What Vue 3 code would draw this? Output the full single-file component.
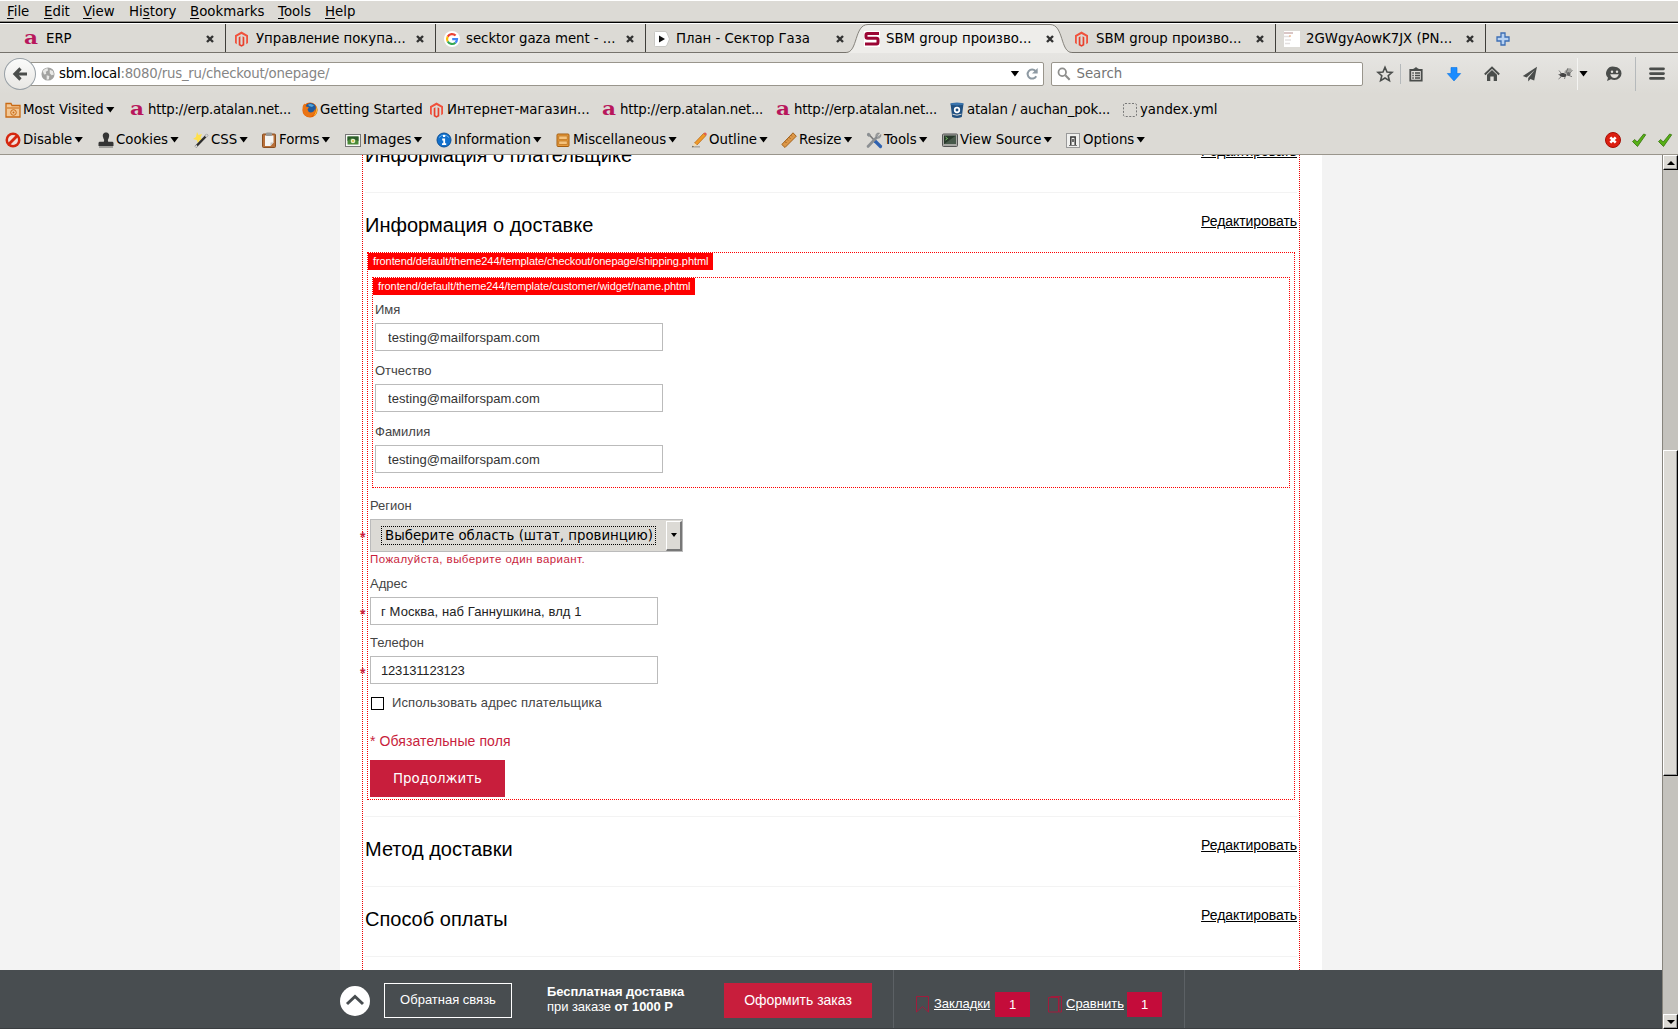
<script setup>
import { ref } from 'vue'

// SVG bodies, all on a 16x16 grid
const icons = {
  atalan: '<text x="0" y="13" font-family="DejaVu Serif, serif" font-weight="bold" font-size="18" textLength="14" lengthAdjust="spacingAndGlyphs" fill="#b8165c">a</text>',
  magento: '<path d="M7.500 0.500 14 4.300V12l-1.800 1.200V5.500L7.500 2.900 2.800 5.500v7.700L1 12V4.300z" fill="#f0513c"/><path d="M4.700 6.200 6.400 5.300v8l1.100.7 1.100-.7v-8l1.700.9v8.000L7.500 15.800l-2.800-1.600z" fill="#e8402c"/>',
  google: '<circle cx="8" cy="8" r="8" fill="#fff"/><g fill="none" stroke-width="2.2"><path d="M11.6 4.6A5 5 0 0 0 3.7 5.6" stroke="#ea4335"/><path d="M3.7 5.6a5 5 0 0 0 0 4.9" stroke="#fbbc05"/><path d="M3.7 10.5a5 5 0 0 0 7.7 1.2" stroke="#34a853"/><path d="M11.4 11.7A5 5 0 0 0 13 8.2H8.2" stroke="#4285f4"/></g>',
  play: '<path d="M1.500 0.500h9.500q1.500 0 2 1.500l2.500 6-2.500 6q-.5 1.500-2 1.500H1.500a1 1 0 0 1-1-1v-13a1 1 0 0 1 1-1z" fill="#fff" stroke="#c9c8c4"/><path d="M5 4.500 11 8l-6 3.500z" fill="#111"/>',
  sbm: '<rect width="16" height="16" fill="#fff"/><path d="M15 2.500H3.500Q2 2.500 2 4v1.500Q2 7.200 3.500 7.200h9Q14 7.200 14 9v2Q14 13 12.500 13H1" fill="none" stroke="#9b0634" stroke-width="3"/>',
  doc: '<rect width="16" height="16" fill="#fff"/><path d="M0 2h9M0 5.500h6M1 9h6M1 12.500h5" stroke="#e3dfdf" stroke-width="1.500"/><path d="M0 2h9" stroke="#c9a6a6"/><path d="M5 5h2" stroke="#e6a06c"/>',
  folder: '<path d="M1 3.500V1.500h5l1 2h8v11.500H1z" fill="#f3c896" stroke="#c96a14" stroke-width="1.300"/><path d="M2 6h12" stroke="#c96a14"/><circle cx="8.500" cy="10.500" r="2.800" fill="none" stroke="#c96a14"/><circle cx="8.500" cy="10.500" r="1" fill="#c96a14"/>',
  firefox: '<circle cx="8" cy="8" r="7.600" fill="#e66000"/><circle cx="8.600" cy="6.200" r="5.300" fill="#1f5a9e"/><path d="M6 2.500Q9 1 12 3.500L10 5 7 4z" fill="#4ea3dc"/><path d="M.6 5Q1 2.500 2.500 1.500L4 4.500l3 .8-1.500 2.200q.5 2.500 3 3 3.500 0 5-4.500.5 6-4.500 8.500Q4.500 16 1.500 12z" fill="#ea7415"/><path d="M14.500 4q1.300 3.500 0 6.500-1 2.500-3 3.700 3-4 3-10.200z" fill="#ffcf3a"/>',
  bucket: '<path d="M1.500 1.500h13L12.800 15q-4.800 1.800-9.600 0z" fill="#205081"/><ellipse cx="8" cy="2" rx="6.700" ry="1.500" fill="#3a74ad"/><circle cx="8" cy="8" r="2.300" fill="#205081" stroke="#fff" stroke-width="1.700"/><path d="M3.500 12.200q4.500 2 9 0" stroke="#dcdad5" fill="none"/>',
  dashed: '<rect x="1.500" y="1.500" width="13" height="13" rx="1.500" fill="none" stroke="#777" stroke-dasharray="2 1.500"/>',
  disable: '<circle cx="8" cy="8" r="7.500" fill="#d5270f"/><circle cx="8" cy="8" r="5" fill="#f2dfda"/><path d="M4 12l8-8" stroke="#d5270f" stroke-width="2.800"/>',
  cookies: '<path d="M8 0.500c3 0 3.600 2.500 3 4.500Q10.500 7 9.800 8l.4 1.700h4.300q1 0 1 1.500V14H.5v-2.800q0-1.500 1-1.500h4.300L6.200 8Q5.500 7 5 5c-.6-2 0-4.500 3-4.500z" fill="#353535"/><path d="M1 15h14" stroke="#6a6a68"/>',
  css: '<path d="M4 0l1.500 3L9 2 7.500 5.500 10 8 6.500 8 5 11.500 3.800 8 0 7l3-2z" fill="#ffe04a"/><path d="M14.500 2.500 2.500 15" stroke="#2e2e2e" stroke-width="2.500"/><path d="M14.500 2.500 12.500 4.600M4 13.500 2.500 15" stroke="#d8d8d8" stroke-width="2"/>',
  forms: '<rect x="1.500" y="2" width="13" height="13.500" rx="1" fill="#b8703a" stroke="#8a4f20"/><path d="M4 3.500h8.500v7L9.500 14H4z" fill="#f5f5f3"/><path d="M9.500 14v-3.500h3z" fill="#c6c6c4"/><rect x="5" y=".5" width="6" height="3.500" rx="1" fill="#9a9a98"/>',
  images: '<rect x=".5" y="2.500" width="15" height="12" fill="#f7f7f5" stroke="#777"/><rect x="2.500" y="4.500" width="11" height="8" fill="#4a8a38"/><path d="M2.500 9l4-3 7 3V4.500h-11z" fill="#2c5c2c"/><circle cx="8" cy="9" r="2.300" fill="#e9efca"/><circle cx="8" cy="9" r=".9" fill="#d7b72e"/>',
  info: '<circle cx="8" cy="8" r="7" fill="#1170cc" stroke="#0b4f95"/><path d="M3 5.500q5-5 10 0" stroke="#6fb4f0" fill="none"/><path d="M7 4h2.200M6.200 7.500h2v4.500M6 12.200h4.200" stroke="#fff" stroke-width="1.800" fill="none"/>',
  misc: '<rect x="2" y="2" width="12" height="12.500" rx="1" fill="#e79a3c" stroke="#a55e10"/><rect x="3.800" y="4" width="8.400" height="3.600" fill="#f5c27c" stroke="#b8701c" stroke-width=".7"/><rect x="3.800" y="9" width="8.400" height="3.600" fill="#f5c27c" stroke="#b8701c" stroke-width=".7"/>',
  outline: '<path d="M2 14.800h7" stroke="#aaa8a2" stroke-width="1.500"/><path d="M3.500 11 12.500 1.500l2.500 2L6 13z" fill="#f09a28" stroke="#b3620e" stroke-width=".7"/><path d="M12.500 1.500l2.500 2 1-1.500-2-1.700z" fill="#e35a50"/><path d="M3.500 11 .8 15.500 6 13z" fill="#f3dcb0"/><path d="M.8 15.500l1-1.700 1 1z" fill="#333"/>',
  resize: '<path d="M.8 12.500 12 .8l3.300 3.400L4 15.500z" fill="#dc9748" stroke="#a5631c"/><path d="M4 9.500l1.500 1.500M6 7.400l1 1M8 5.300l1.500 1.500M10 3.300l1 1" stroke="#8a4f12" stroke-width=".8"/>',
  tools: '<path d="M2 1.500 9 9" stroke="#777" stroke-width="1.600"/><path d="M9 9l5.500 5.500" stroke="#2f62b0" stroke-width="3.200" stroke-linecap="round"/><path d="M2 14.500 11 5" stroke="#8b8f92" stroke-width="2.600" stroke-linecap="round"/><path d="M15 2.500 12.800 4.500 11.500 3.200 13.500 1Q10.500.5 9.800 3q-.2 2.500 2 3.200 3 .3 3.200-3.700z" fill="#a6aaad" stroke="#666" stroke-width=".5"/><path d="M1 3.500Q.5 1 3 .8L5 3 3 5z" fill="#8b8f92"/>',
  terminal: '<rect x=".5" y="2" width="15" height="12.500" rx="1" fill="#a7a7a3" stroke="#555"/><rect x="2" y="3.500" width="12" height="8.500" fill="#27382a"/><path d="M3.500 5l2 1.500-2 1.500" stroke="#7fd36c" fill="none" stroke-width=".9"/><path d="M2 12 14 3.500V12z" fill="#47594a"/>',
  options: '<rect x="1.500" y="1.500" width="13" height="14" fill="#f0f0ee" stroke="#999"/><path d="M5.800 13V5h4.400V13M8 7v3" stroke="#333" stroke-width="1.400" fill="none"/><path d="M4 13.500h8" stroke="#777"/>',
  globe: '<circle cx="8" cy="8" r="7.500" fill="#a3a3a1"/><path d="M2 4.500Q5 1 7.500 1.500L8 4 5.500 5.500 6 8 3.500 8.500zM10 3l3.500 1.500 1.300 4-2.800 1L10 7zM6.500 9.500l3 .8L9 14l-2.500.5z" fill="#e9e9e7"/>',
  star: '<path d="M8 1.300 10 6l5 .4-3.800 3.300 1.200 4.900L8 12l-4.400 2.600 1.200-4.900L1 6.400 6 6z" fill="none" stroke="#4a4d4b" stroke-width="1.600"/>',
  clipboard: '<path d="M2.300 4h11.400v10.700H2.300z" fill="none" stroke="#4a4d4b" stroke-width="1.800"/><path d="M5 4q0-1.500 1.500-1.700Q8 0 9.500 2.300 11 2.500 11 4z" fill="#4a4d4b"/><path d="M4.300 7h1.500M7 7h5M4.300 9.500h1.500M7 9.500h5M4.300 12h1.500M7 12h5" stroke="#4a4d4b" stroke-width="1.400"/>',
  download: '<path d="M5 1.500h6v6h3.700L8 15 1.300 7.500H5z" fill="#1a8cff" stroke="#0c74e0" stroke-width=".6"/>',
  home: '<path d="M.8 8.500 8 1.500l7.200 7" fill="none" stroke="#4a4d4b" stroke-width="1.900"/><path d="M3 8.800 8 4l5 4.800V15H9.700v-4.500H6.300V15H3z" fill="#4a4d4b"/>',
  plane: '<path d="M15 .8.8 10l3.800 1.400L12.800 4 6.200 12v3.500l2.200-2.600 3.800 1.500z" fill="#4a4d4b"/>',
  fly: '<ellipse cx="6" cy="9" rx="3.500" ry="2" fill="#444" transform="rotate(10 6 9)"/><ellipse cx="11" cy="5" rx="4" ry="2" fill="#a5a5a1" transform="rotate(-30 11 5)"/><circle cx="11.500" cy="8" r="2" fill="#666"/><path d="M4 11l-2.500 2M8 11l-.5 2M12 9.500l3 1.200M13 7l2.500-3M4 7L2 4.500M1.500 8.500h3M9 7l2-5" stroke="#555" stroke-width=".7"/>',
  smiley: '<path d="M8.500.8a7 6.600 0 0 1 0 13.200q-2 0-3.500-.7L1 15l1-3.200A6.800 6.600 0 0 1 8.500.8z" fill="#4a4d4b"/><circle cx="6" cy="5.800" r="1.200" fill="#e2e1dd"/><circle cx="11" cy="5.800" r="1.200" fill="#e2e1dd"/><path d="M4.200 8.300h8.600q-1 3.700-4.300 3.700T4.200 8.300z" fill="#e2e1dd"/>',
  menu: '<path d="M1.500 2.800h13M1.500 7.600h13M1.500 12.400h13" stroke="#4a4d4b" stroke-width="2.800" stroke-linecap="round"/>',
  error: '<circle cx="8" cy="8" r="7.500" fill="#dc1e10" stroke="#a50d04"/><path d="M5.300 5.300l5.400 5.400M10.700 5.300l-5.400 5.400" stroke="#fff" stroke-width="2.600"/>',
  check: '<path d="M1.500 9.500l2.300-2 2.400 2.500 6.500-8 2 .8L6.500 14.500z" fill="#57b016" stroke="#33720a" stroke-width=".8"/>',
  reload: '<path d="M12 4.500A5.200 5.200 0 1 0 12.800 10.500" fill="none" stroke="#8e9aa3" stroke-width="2.300"/><path d="M14.500 1v6.500H8z" fill="#8e9aa3"/>',
  search: '<circle cx="6" cy="6" r="4.300" fill="none" stroke="#8f8f8d" stroke-width="2"/><path d="M9.500 9.500l5 5" stroke="#8f8f8d" stroke-width="2.400"/>',
  plus: '<path d="M6 2h4v4h4v4h-4v4H6v-4H2V6h4z" fill="#b8d2f2" stroke="#3c6eb4" stroke-width="1.300"/>'
}

const menu = [
  { key: 'F', rest: 'ile', w: 37 },
  { key: 'E', rest: 'dit', w: 39 },
  { key: 'V', rest: 'iew', w: 46 },
  { pre: 'Hi', key: 's', rest: 'tory', w: 61 },
  { key: 'B', rest: 'ookmarks', w: 88 },
  { key: 'T', rest: 'ools', w: 47 },
  { key: 'H', rest: 'elp', w: 40 }
]

const tabs = [
  { icon: 'atalan', title: 'ERP' },
  { icon: 'magento', title: 'Управление покупа...' },
  { icon: 'google', title: 'secktor gaza ment - ...' },
  { icon: 'play', title: 'План - Сектор Газа' },
  { icon: 'sbm', title: 'SBM group произво...', active: true },
  { icon: 'magento', title: 'SBM group произво...' },
  { icon: 'doc', title: '2GWgyAowK7JX (PN...' }
]

const bookmarks = [
  { icon: 'folder', title: 'Most Visited', drop: true, w: 125 },
  { icon: 'atalan', title: 'http://erp.atalan.net...', tight: true, w: 172 },
  { icon: 'firefox', title: 'Getting Started', w: 127 },
  { icon: 'magento', title: 'Интернет-магазин...', w: 173 },
  { icon: 'atalan', title: 'http://erp.atalan.net...', tight: true, w: 174 },
  { icon: 'atalan', title: 'http://erp.atalan.net...', tight: true, w: 173 },
  { icon: 'bucket', title: 'atalan / auchan_pok...', tight: true, w: 173 },
  { icon: 'dashed', title: 'yandex.yml', w: 110 }
]

const devtools = [
  { icon: 'disable', title: 'Disable', w: 93 },
  { icon: 'cookies', title: 'Cookies', w: 95 },
  { icon: 'css', title: 'CSS', w: 68 },
  { icon: 'forms', title: 'Forms', w: 84 },
  { icon: 'images', title: 'Images', w: 91 },
  { icon: 'info', title: 'Information', w: 119 },
  { icon: 'misc', title: 'Miscellaneous', w: 136 },
  { icon: 'outline', title: 'Outline', w: 90 },
  { icon: 'resize', title: 'Resize', w: 85 },
  { icon: 'tools', title: 'Tools', w: 76 },
  { icon: 'terminal', title: 'View Source', w: 123 },
  { icon: 'options', title: 'Options', w: 90 }
]

const names = ref([
  { label: 'Имя', value: 'testing@mailforspam.com' },
  { label: 'Отчество', value: 'testing@mailforspam.com' },
  { label: 'Фамилия', value: 'testing@mailforspam.com' }
])

const address = ref('г Москва, наб Ганнушкина, влд 1')
const phone = ref('123131123123')
</script>

<template>
  <div class="window">
    <nav class="menubar">
      <span v-for="m in menu" :key="m.key + m.rest" :style="{ width: m.w + 'px' }">{{ m.pre }}<u>{{ m.key }}</u>{{ m.rest }}</span>
    </nav>

    <div class="tabs">
      <div v-for="(t, i) in tabs" :key="i" class="tab" :class="{ 'tab--active': t.active, 'tab--before': i === 3 }">
        <svg v-if="t.active" class="tab__shape" viewBox="0 0 226 29">
          <path d="M0 28.500C12 28.500 8 .5 22 .5H204C218 .5 214 28.500 226 28.500V29H0z" fill="#eeedea" />
          <path d="M0 28.500C12 28.500 8 .5 22 .5H204C218 .5 214 28.500 226 28.500" fill="none" stroke="#85827b" />
        </svg>
        <svg class="ico" viewBox="0 0 16 16" v-html="icons[t.icon]"></svg>
        <span class="tab__title">{{ t.title }}</span>
        <svg class="tab__close" viewBox="0 0 8 8"><path d="M1 1l6 6M7 1L1 7" stroke="#333" stroke-width="2.400" /></svg>
      </div>
      <svg class="ico tabs__new" viewBox="0 0 16 16" v-html="icons.plus"></svg>
    </div>

    <div class="navbar">
      <div class="back">
        <svg viewBox="0 0 16 16"><path d="M15 8H4M8.500 2.500 3 8l5.500 5.500" fill="none" stroke="#4a4d4b" stroke-width="3.200" /></svg>
      </div>
      <div class="url">
        <svg class="ico ico--s" viewBox="0 0 16 16" v-html="icons.globe"></svg>
        <span class="url__text"><b>sbm.local</b>:8080/rus_ru/checkout/onepage/</span>
        <i class="caret"></i>
        <svg class="ico ico--s" viewBox="0 0 16 16" v-html="icons.reload"></svg>
      </div>
      <div class="search">
        <svg class="ico ico--s" viewBox="0 0 16 16" v-html="icons.search"></svg>
        <span>Search</span>
      </div>
      <div class="actions">
        <svg class="ico" viewBox="0 0 16 16" v-html="icons.star"></svg>
        <i class="sep sep--a"></i>
        <svg class="ico" viewBox="0 0 16 16" v-html="icons.clipboard"></svg>
        <svg class="ico gap" viewBox="0 0 16 16" v-html="icons.download"></svg>
        <svg class="ico gap" viewBox="0 0 16 16" v-html="icons.home"></svg>
        <svg class="ico gap" viewBox="0 0 16 16" v-html="icons.plane"></svg>
        <svg class="ico gap--s" viewBox="0 0 16 16" v-html="icons.fly"></svg>
        <i class="sep sep--b"></i>
        <i class="caret"></i>
        <svg class="ico gap--m" viewBox="0 0 16 16" v-html="icons.smiley"></svg>
        <i class="sep sep--c"></i>
        <svg class="ico gap--e" viewBox="0 0 16 16" v-html="icons.menu"></svg>
      </div>
    </div>

    <div class="bookmarks">
      <div v-for="(b, i) in bookmarks" :key="i" class="tool" :class="{ 'tool--tight': b.tight }" :style="{ width: b.w + 'px' }">
        <svg class="ico" viewBox="0 0 16 16" v-html="icons[b.icon]"></svg>
        <span>{{ b.title }}</span>
        <i v-if="b.drop" class="caret"></i>
      </div>
    </div>

    <div class="devbar">
      <div v-for="d in devtools" :key="d.title" class="tool" :style="{ width: d.w + 'px' }">
        <svg class="ico" viewBox="0 0 16 16" v-html="icons[d.icon]"></svg>
        <span>{{ d.title }}</span>
        <i class="caret"></i>
      </div>
      <div class="devbar__status">
        <svg class="ico" viewBox="0 0 16 16" v-html="icons.error"></svg>
        <svg class="ico" viewBox="0 0 16 16" v-html="icons.check"></svg>
        <svg class="ico" viewBox="0 0 16 16" v-html="icons.check"></svg>
      </div>
    </div>

    <div class="body">
      <main class="page">
        <div class="viewport">
          <div class="sheet">
            <div class="checkout">
              <section class="step step--first">
                <div class="step__head"><h2>Информация о плательщике</h2><a>Редактировать</a></div>
              </section>

              <section class="step step--open">
                <div class="step__head"><h2>Информация о доставке</h2><a>Редактировать</a></div>
                <form class="hint-box" @submit.prevent>
                  <span class="hint">frontend/default/theme244/template/checkout/onepage/shipping.phtml</span>

                  <div class="hint-box hint-box--name">
                    <span class="hint">frontend/default/theme244/template/customer/widget/name.phtml</span>
                    <div v-for="n in names" :key="n.label" class="field">
                      <label>{{ n.label }}</label>
                      <input v-model="n.value" class="wide" type="text">
                    </div>
                  </div>

                  <div class="field field--region">
                    <label>Регион</label>
                    <div class="row">
                      <em>*</em>
                      <div class="select">
                        <span>Выберите область (штат, провинцию)</span>
                        <div class="select__btn"><i></i></div>
                      </div>
                    </div>
                    <p class="error">Пожалуйста, выберите один вариант.</p>
                  </div>

                  <div class="field">
                    <label>Адрес</label>
                    <div class="row"><em>*</em><input v-model="address" type="text"></div>
                  </div>
                  <div class="field">
                    <label>Телефон</label>
                    <div class="row"><em>*</em><input v-model="phone" class="digits" type="text"></div>
                  </div>

                  <div class="same"><i></i><span>Использовать адрес плательщика</span></div>
                  <p class="required">* Обязательные поля</p>
                  <button class="continue">Продолжить</button>
                </form>
              </section>

              <section class="step">
                <div class="step__head"><h2>Метод доставки</h2><a>Редактировать</a></div>
              </section>
              <section class="step">
                <div class="step__head"><h2>Способ оплаты</h2><a>Редактировать</a></div>
              </section>
            </div>
          </div>
        </div>

        <footer class="footer">
          <div class="up"><svg viewBox="0 0 30 30"><path d="M7 18 15 10.500 23 18" fill="none" stroke="#484d50" stroke-width="3" /></svg></div>
          <div class="feedback">Обратная связь</div>
          <div class="free"><b>Бесплатная доставка</b><br>при заказе <b>от 1000 Р</b></div>
          <div class="order">Оформить заказ</div>
          <div class="lists">
            <svg viewBox="0 0 14 17"><path d="M.5.500h12v15.500L6.500 10.500.5 16z" fill="none" stroke="#a01c3c" /></svg>
            <a>Закладки</a><span class="badge">1</span>
            <svg class="second" viewBox="0 0 14 17"><path d="M.5 1.500h10v14.500H.500zM2.500.500h11v15.500h-2.500V1.500" fill="none" stroke="#a01c3c" /></svg>
            <a>Сравнить</a><span class="badge">1</span>
          </div>
        </footer>
      </main>

      <div class="scrollbar">
        <div class="scrollbar__btn"><i class="up-arrow"></i></div>
        <div class="scrollbar__track"><div class="scrollbar__thumb"></div></div>
        <div class="scrollbar__btn"><i class="down-arrow"></i></div>
      </div>
    </div>
  </div>
</template>

<style>
body {
  margin: 0;
  overflow: hidden;
}
</style>

<style scoped>
* {
  box-sizing: border-box;
}

.window {
  width: 1678px;
  height: 1029px;
  display: flex;
  flex-direction: column;
  background: #dcdad5;
  color: #000;
  font: 13.33px/18px "DejaVu Sans", sans-serif;
  white-space: nowrap;
  overflow: hidden;
}

.ico {
  width: 16px;
  height: 16px;
  flex: none;
  overflow: visible;
}

.ico--s {
  width: 14px;
  height: 14px;
}

.caret {
  flex: none;
  width: 9px;
  height: 6px;
  background: #000;
  clip-path: polygon(0 0, 100% 0, 50% 100%);
}

.menubar {
  height: 24px;
  padding: 2px 0 0 7px;
  display: flex;
  line-height: 17px;
  border-top: 1px solid #fff;
  box-shadow: inset 0 -1px #fff, inset 0 -2px #000, inset 0 -3px #8d8b85;
}

.menubar u {
  text-underline-offset: 2px;
}

.tabs {
  height: 29px;
  padding-left: 16px;
  display: flex;
  align-items: center;
  border-bottom: 1px solid #76736d;
}

.tab {
  position: relative;
  width: 210px;
  height: 28px;
  padding: 2px 11px 0 8px;
  display: flex;
  align-items: center;
  border-right: 1px solid #3f3e3a;
}

.tab--active,
.tab--before {
  border-right-color: transparent;
}

.tab__shape {
  position: absolute;
  left: -10px;
  top: 0;
  width: 226px;
  height: 29px;
}

.tab .ico,
.tab__title,
.tab__close {
  position: relative;
}

.tab__title {
  flex: 1;
  padding-left: 6px;
  letter-spacing: -0.03px;
}

.tab__close {
  width: 8px;
  height: 8px;
}

.tabs__new {
  margin: 2px 0 0 9px;
}

.navbar {
  height: 41px;
  padding: 0 13px 0 4px;
  display: flex;
  align-items: center;
  background: linear-gradient(#e6e5e2, #dcdad5);
}

.back {
  z-index: 1;
  width: 32px;
  height: 32px;
  display: grid;
  place-items: center;
  border: 1px solid #98a0a6;
  border-radius: 50%;
  background: linear-gradient(#fbfbfa, #e8e7e4);
}

.back svg {
  width: 16px;
  height: 16px;
}

.url,
.search {
  height: 24px;
  display: flex;
  align-items: center;
  background: #fff;
  border: 1px solid #99958c;
  border-radius: 2px;
}

.url {
  width: 1018px;
  margin-left: -8px;
  padding: 0 4px 0 12px;
}

.url__text {
  flex: 1;
  padding-left: 4px;
  color: #858585;
  letter-spacing: -0.25px;
}

.url__text b {
  color: #000;
  font-weight: normal;
}

.url .caret {
  margin-right: 6px;
}

.search {
  width: 312px;
  margin-left: 7px;
  padding-left: 5px;
  gap: 5px;
  color: #757575;
}

.actions {
  flex: 1;
  margin-left: 14px;
  display: flex;
  align-items: center;
}

.actions .gap {
  margin-left: 22px;
}

.actions .gap--s {
  margin-left: 19px;
}

.actions .gap--m {
  margin-left: 18px;
}

.actions .gap--e {
  margin-left: 13px;
}

.sep {
  width: 1px;
  height: 20px;
  background: #b5b9bb;
}

.sep--a {
  margin: 0 7px;
}

.sep--b {
  height: 32px;
  margin: 0 1px 0 4px;
  background: #f4f4f2;
}

.sep--c {
  height: 34px;
  margin-left: 13px;
}

.bookmarks {
  height: 30px;
  padding: 1px 0 0 5px;
  display: flex;
  align-items: center;
}

.devbar {
  height: 31px;
  padding: 1px 5px 0 5px;
  display: flex;
  align-items: center;
  border-bottom: 1px solid #99958c;
}

.tool {
  flex: none;
  display: flex;
  align-items: center;
}

.tool span {
  margin: 0 2px;
  letter-spacing: -0.03px;
}

.tool--tight span {
  letter-spacing: -0.2px;
}

.devbar__status {
  margin-left: auto;
  display: flex;
  gap: 10px;
}

.body {
  height: 874px;
  display: flex;
}

.page {
  width: 1662px;
  background: #f3f3f3;
  font-family: "Liberation Sans", Arial, sans-serif;
}

.viewport {
  height: 815px;
  padding-left: 340px;
  overflow: hidden;
}

.sheet {
  width: 982px;
  height: 815px;
  padding: 0 22px;
  background: #fff;
}

.checkout {
  height: 815px;
  padding: 0 2px;
  border: 1px dotted #e00;
  border-width: 0 1px;
}

.step {
  height: 70px;
  border-bottom: 1px solid #f3f3f3;
}

.step--first {
  margin-top: -32px;
}

.checkout::before {
  content: "";
  display: table;
}

.step--open {
  height: 624px;
}

.step__head {
  height: 59px;
  padding-top: 20px;
  display: flex;
  justify-content: space-between;
}

.step h2 {
  margin: 0;
  font: 20px/24px "Liberation Sans", Arial, sans-serif;
}

.step a {
  font-size: 14px;
  line-height: 16px;
  letter-spacing: -0.06px;
  text-decoration: underline;
}

.hint-box {
  position: relative;
  height: 548px;
  margin: 0 2px;
  padding: 24px 2px 0;
  border: 1px dotted #f00;
  color: #444;
  font-size: 13px;
}

.hint-box--name {
  height: 211px;
  margin-bottom: 10px;
}

.hint {
  position: absolute;
  left: 0;
  top: 0;
  height: 17px;
  padding: 0 5px;
  background: #f00;
  color: #fff;
  font-size: 11px;
  line-height: 16px;
  letter-spacing: -0.08px;
}

.field {
  margin-bottom: 10px;
}

.hint-box--name .field {
  margin-bottom: 12px;
}

label {
  display: block;
  margin-bottom: 5px;
  line-height: 16px;
}

input {
  display: block;
  width: 288px;
  height: 28px;
  padding: 0 10px;
  border: 1px solid #bbb;
  border-radius: 0;
  background: #fff;
  color: #222;
  font: 13px "Liberation Sans", Arial, sans-serif;
  letter-spacing: 0.1px;
}

input.wide {
  padding: 0 12px;
  color: #333;
  letter-spacing: 0.06px;
}

input.digits {
  letter-spacing: -0.18px;
}

.row {
  display: flex;
  align-items: center;
}

.row em {
  width: 10px;
  margin-left: -10px;
  padding-top: 5px;
  color: #c81e3c;
  font-style: normal;
  font-weight: bold;
  font-size: 14px;
}

.field--region em {
  padding-top: 2px;
}

.select {
  width: 313px;
  height: 33px;
  padding-left: 10px;
  display: flex;
  align-items: center;
  justify-content: space-between;
  border: 1px solid #bbb;
  background: #dcdad5;
  color: #000;
  font-family: "DejaVu Sans", sans-serif;
  font-size: 13.33px;
}

.select span {
  width: 275px;
  padding-left: 3px;
  border: 1px dotted #000;
  line-height: 17px;
}

.select__btn {
  width: 16px;
  height: 30px;
  display: grid;
  place-items: center;
  border: 1px solid #fff;
  border-right: 2px solid #777;
  border-bottom: 2px solid #777;
}

.select__btn i {
  border: 3px solid transparent;
  border-top: 4px solid #000;
  border-bottom: 0;
}

.error {
  margin: 0;
  color: #c81e3c;
  font-size: 11.5px;
  line-height: 14px;
  letter-spacing: 0.45px;
}

.same {
  height: 17px;
  margin-top: 11px;
  display: flex;
  line-height: 16px;
  letter-spacing: 0.12px;
}

.same i {
  width: 13px;
  height: 13px;
  margin: 2px 8px 0 1px;
  border: 1px solid #000;
}

.required {
  margin: 20px 0 10px;
  color: #c81e3c;
  font-size: 14px;
  line-height: 18px;
  letter-spacing: 0.1px;
}

.continue {
  display: block;
  width: 135px;
  height: 37px;
  padding: 0;
  border: 0;
  background: #c81e3c;
  color: #fff;
  font: 13.33px "DejaVu Sans", sans-serif;
}

.footer {
  height: 59px;
  padding-left: 340px;
  display: flex;
  align-items: flex-start;
  background: #484d50;
  border-bottom: 1px solid #3a3e41;
  color: #fff;
  font-size: 13px;
}

.up {
  width: 30px;
  height: 30px;
  margin-top: 16px;
  border-radius: 50%;
  background: #fff;
}

.feedback {
  width: 128px;
  height: 35px;
  margin: 13px 0 0 14px;
  border: 1px solid #fff;
  text-align: center;
  line-height: 32px;
}

.free {
  width: 177px;
  margin: 14px 0 0 35px;
  line-height: 15px;
  letter-spacing: -0.05px;
}

.order {
  width: 148px;
  height: 35px;
  margin-top: 13px;
  background: #c81e3c;
  text-align: center;
  font-size: 14px;
  line-height: 34px;
}

.lists {
  width: 292px;
  height: 58px;
  margin-left: 21px;
  padding: 10px 0 0 22px;
  display: flex;
  align-items: center;
  border: 1px solid #5c6165;
  border-width: 0 1px;
}

.lists svg {
  width: 14px;
  height: 17px;
  margin-right: 4px;
}

.lists .second {
  margin-left: 18px;
}

.lists a {
  width: 58px;
  margin-right: 3px;
  text-decoration: underline;
}

.badge {
  width: 35px;
  height: 25px;
  background: #c40c3a;
  text-align: center;
  line-height: 25px;
}

.scrollbar {
  width: 16px;
  height: 874px;
  display: flex;
  flex-direction: column;
  border-left: 1px solid #87847d;
  background: #c4c2bd;
}

.scrollbar__btn,
.scrollbar__thumb {
  border: 1px solid #fff;
  border-right: 1px solid #000;
  border-bottom: 1px solid #000;
  background: #dcdad5;
  box-shadow: inset -1px -1px #999;
}

.scrollbar__btn {
  width: 15px;
  height: 15px;
  display: grid;
  place-items: center;
}

.scrollbar__track {
  flex: 1;
  padding-top: 280px;
}

.scrollbar__thumb {
  height: 326px;
}

.up-arrow,
.down-arrow {
  border: 4px solid transparent;
}

.up-arrow {
  border-top: 0;
  border-bottom-color: #000;
}

.down-arrow {
  border-bottom: 0;
  border-top-color: #000;
}
</style>
